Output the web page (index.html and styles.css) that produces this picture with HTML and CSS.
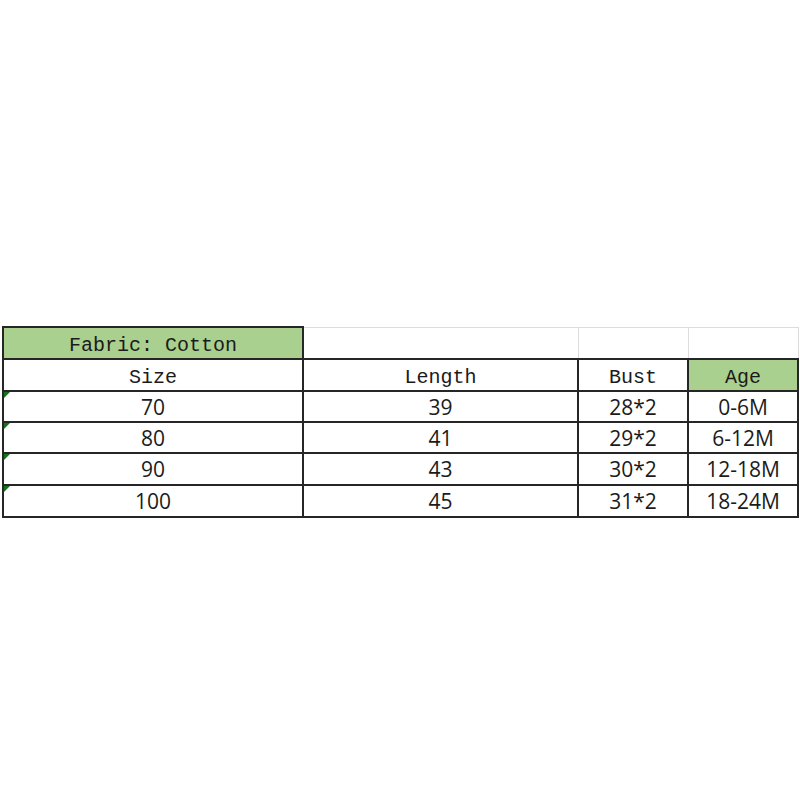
FILE: index.html
```html
<!DOCTYPE html>
<html>
<head>
<meta charset="utf-8">
<link rel="stylesheet" href="styles.css">
</head>
<body>
<div class="page">
  <table class="sheet">
    <colgroup>
      <col class="c1"><col class="c2"><col class="c3"><col class="c4">
    </colgroup>
    <tr class="r-top">
      <td class="title">Fabric: Cotton</td>
      <td class="blank"></td>
      <td class="blank"></td>
      <td class="blank"></td>
    </tr>
    <tr class="r-head">
      <td class="head">Size</td>
      <td class="head">Length</td>
      <td class="head">Bust</td>
      <td class="head green">Age</td>
    </tr>
    <tr class="r-a">
      <td class="num mark">70</td><td class="num">39</td><td class="num">28*2</td><td class="num">0-6M</td>
    </tr>
    <tr class="r-a">
      <td class="num mark">80</td><td class="num">41</td><td class="num">29*2</td><td class="num">6-12M</td>
    </tr>
    <tr class="r-b">
      <td class="num mark">90</td><td class="num">43</td><td class="num">30*2</td><td class="num">12-18M</td>
    </tr>
    <tr class="r-b">
      <td class="num mark">100</td><td class="num">45</td><td class="num">31*2</td><td class="num">18-24M</td>
    </tr>
  </table>
</div>
</body>
</html>
```

FILE: styles.css
```css
html, body {
  margin: 0;
  padding: 0;
  background: #ffffff;
}

.page {
  padding: 326px 0 0 2px;
}

.sheet {
  border-collapse: collapse;
  table-layout: fixed;
  width: 797px;
  color: #1b1b1b;
}

.c1 { width: 300px; }
.c2 { width: 275px; }
.c3 { width: 110px; }
.c4 { width: 110px; }

.sheet td {
  border: 2px solid #262626;
  padding: 0;
  text-align: center;
  vertical-align: middle;
  position: relative;
}

.r-top td { height: 30px; }
.r-head td { height: 30px; }
.r-a td { height: 29px; }
.r-b td { height: 30px; }

.sheet td.blank {
  border: 1px solid #dcdcdc;
  border-bottom: 2px solid #262626;
}

.title {
  background: #a9d08e;
  font-family: "Liberation Mono", monospace;
  font-size: 20px;
  line-height: 20px;
}

.r-top td.title,
.r-head td.head {
  height: 25px;
  padding-top: 5px;
}

.head {
  font-family: "Liberation Mono", monospace;
  font-size: 20px;
  line-height: 20px;
}

.green {
  background: #a9d08e;
}

.num {
  font-family: "Open Sans", sans-serif;
  font-size: 21px;
  line-height: 22px;
}

.mark::before {
  content: "";
  position: absolute;
  left: 0;
  top: 0;
  width: 0;
  height: 0;
  border-top: 6px solid #17701a;
  border-right: 6px solid transparent;
}
```
